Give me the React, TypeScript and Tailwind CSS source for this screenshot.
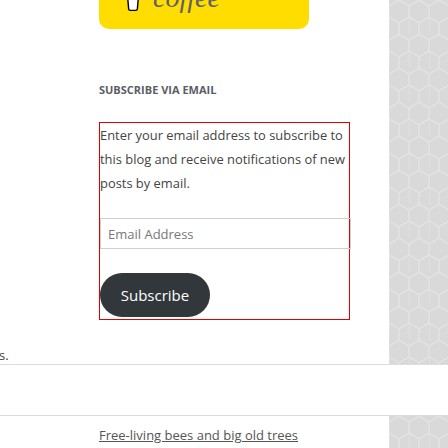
import React from "react";

function Texture() {
  return (
    <svg className="block h-full w-full" xmlns="http://www.w3.org/2000/svg">
      <defs>
        <pattern id="hex" width="20" height="34" patternUnits="userSpaceOnUse">
          <rect width="20" height="34" fill="#d9d9d9" />
          <path
            d="M10 0 L20 6 L20 17 L10 23 L0 17 L0 6 Z M10 23 L10 34 M0 17 L0 34"
            fill="none"
            stroke="#e3e3e3"
            strokeWidth="1.5"
          />
        </pattern>
      </defs>
      <rect width="100%" height="100%" fill="url(#hex)" />
    </svg>
  );
}

function CoffeeCup() {
  return (
    <svg width="16" height="28" viewBox="0 0 16 28">
      <path d="M1 2 L15 2 L13 25 Q13 27 11 27 L5 27 Q3 27 3 25 Z" fill="#fff" stroke="#000" strokeWidth="1.6" />
    </svg>
  );
}

export default function App() {
  return (
    <div className="w-[448px] h-[448px] overflow-hidden bg-white font-['Open_Sans',sans-serif] text-[#444]">
      <div className="flex h-[364px]">
        <div className="w-[99px] flex flex-col justify-end">
          <p className="text-[13px] leading-[18px] -ml-[1px]">s.</p>
        </div>
        <div className="w-[290px] flex flex-col">
          <a className="-mt-[31px] h-[60px] w-[210px] rounded-[10px] bg-[#ffdd00] flex items-end gap-[13px] pl-[27px] pb-[16px]">
            <CoffeeCup />
            <span className="font-['Liberation_Serif',serif] italic text-[28px] leading-[30px] text-[#5f5f6a]">Buy me a coffee</span>
          </a>
          <h3 className="mt-[53px] text-[11px] leading-[16px] font-bold uppercase text-[#5a5d66]">
            Subscribe via Email
          </h3>
          <div className="mt-[24px] w-[251px] h-[198px] border border-[#e00000] flex flex-col">
            <p className="text-[12.9px] leading-[24px] whitespace-nowrap">
              Enter your email address to subscribe to
              <br />
              this blog and receive notifications of new
              <br />
              posts by email.
            </p>
            <input
              type="email"
              placeholder="Email Address"
              className="mt-[23px] w-[251px] h-[31px] border border-[#cfcfcf] px-[7px] text-[13px] placeholder:text-[#777] outline-none"
            />
            <button className="mt-[24px] w-[110px] h-[44px] rounded-full bg-[#32373c] text-white text-[15px] leading-none">
              Subscribe
            </button>
          </div>
        </div>
        <div className="flex-1">
          <Texture />
        </div>
      </div>
      <div className="h-[52px] border-y border-[#dddddd]" />
      <div className="flex h-[40px]">
        <div className="w-[389px] pl-[99px] pt-[6px]">
          <a href="#" className="text-[13px] leading-[20px] text-[#555] underline">
            Free-living bees and big old trees
          </a>
        </div>
        <div className="flex-1">
          <Texture />
        </div>
      </div>
    </div>
  );
}
